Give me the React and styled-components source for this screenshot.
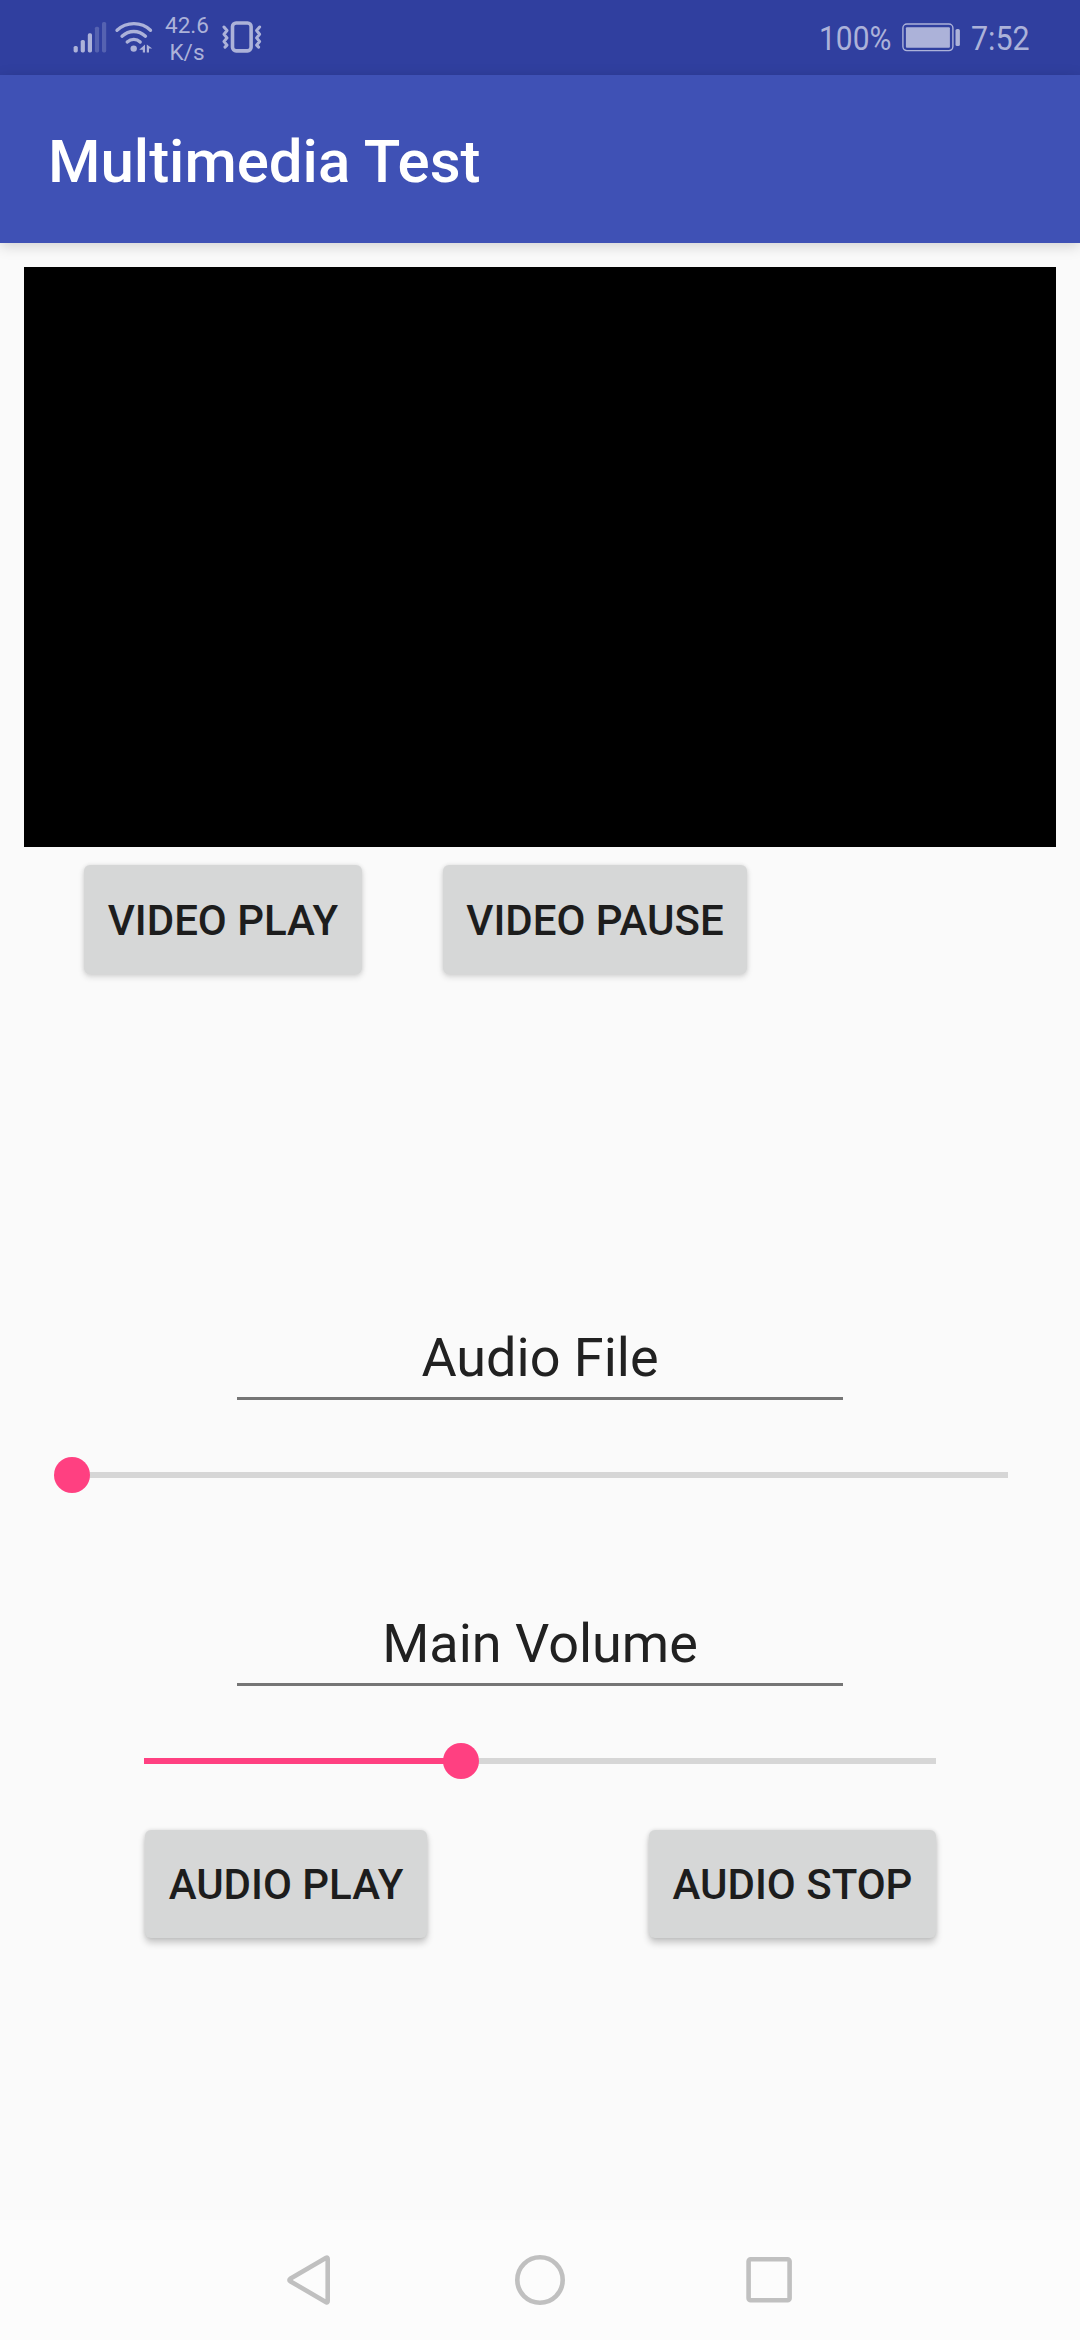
import React from "react";
import styled, { createGlobalStyle } from "styled-components";

const GlobalStyle = createGlobalStyle`
  *, *::before, *::after { box-sizing: border-box; }
  body { margin: 0; background: #fafafa; }
`;

const Screen = styled.div`
  display: flex;
  flex-direction: column;
  width: 1080px;
  height: 2340px;
  background: #fafafa;
  font-family: Roboto, "Liberation Sans", sans-serif;
  color: #212121;
  overflow: hidden;
`;

const StatusBar = styled.header`
  display: flex;
  justify-content: space-between;
  flex: none;
  height: 75px;
  padding: 0 51px 0 73px;
  background: #303f9f;
  color: #acb2d9;
`;

const StatusGroup = styled.div`
  display: flex;
  align-items: center;
`;

const StatusIcon = styled.svg`
  display: block;
  flex: none;
  width: ${(p) => p.$w}px;
  height: 75px;
  margin-left: ${(p) => p.$gap || 0}px;
`;

const NetSpeed = styled.div`
  width: 46px;
  margin-left: 10px;
  padding-top: 2px;
  text-align: center;
  font-size: 22.5px;
  line-height: 27px;
`;

const StatusText = styled.span`
  flex: none;
  width: ${(p) => p.$w}px;
  white-space: nowrap;
  font-size: 34px;
  line-height: 40px;
  transform: scaleX(${(p) => p.$condense});
  transform-origin: left center;
`;

const AppBar = styled.div`
  display: flex;
  align-items: center;
  flex: none;
  height: 168px;
  padding: 6px 48px 0;
  background: #3f51b5;
  box-shadow: 0 3px 13px rgba(0, 0, 0, 0.17);
`;

const Title = styled.h1`
  margin: 0;
  color: #fff;
  font-size: 60px;
  line-height: 70px;
  font-weight: 500;
`;

const Content = styled.main`
  display: flex;
  flex-direction: column;
  flex: 1;
  padding: 24px 24px 0;
`;

const Video = styled.div`
  height: 580px;
  background: #000;
`;

const VideoControls = styled.div`
  display: flex;
  gap: 81px;
  padding: 18px 0 0 60px;
`;

const AudioControls = styled.div`
  display: flex;
  justify-content: space-between;
  margin: 51px 120px 0 121px;
`;

const Button = styled.button`
  width: ${(p) => p.$w}px;
  height: ${(p) => p.$h}px;
  padding: 2px 0 0;
  border: 0;
  border-radius: 6px;
  background: #d6d7d7;
  color: #1d1d1d;
  font: 500 42px/50px Roboto, "Liberation Sans", sans-serif;
  white-space: nowrap;
  box-shadow: ${(p) => (p.$low
    ? "0 5px 7px rgba(0, 0, 0, 0.2), 0 0 4px rgba(0, 0, 0, 0.12)"
    : "0 3px 6px rgba(0, 0, 0, 0.14), 0 0 4px rgba(0, 0, 0, 0.09)")};
`;

const Field = styled.div`
  width: 606px;
  height: 90px;
  margin: ${(p) => p.$top}px auto 0;
  padding-top: 16px;
  border-bottom: 3px solid #757575;
  text-align: center;
  font-size: 54px;
  line-height: 64px;
`;

const Slider = styled.div`
  display: flex;
  align-items: center;
  height: 36px;
  margin: 57px ${(p) => p.$inset}px 0;
`;

const Track = styled.div`
  height: 6px;
  flex: ${(p) => p.$grow} 1 0;
  background: ${(p) => (p.$on ? "#ff4081" : "#d6d6d6")};
`;

const Thumb = styled.div`
  z-index: 1;
  flex: none;
  width: 36px;
  height: 36px;
  margin: 0 -18px;
  border-radius: 50%;
  background: #ff4081;
`;

const NavBar = styled.nav`
  display: flex;
  justify-content: center;
  align-items: center;
  gap: 178px;
  flex: none;
  height: 120px;
  background: #fcfcfc;
`;

const NavIcon = styled.svg`
  display: block;
  width: 52px;
  height: 52px;
  fill: none;
  stroke: #c0c0c0;
  stroke-width: 4.6;
  stroke-linejoin: round;
`;

const bars = [[46, 1], [40, 1], [33.3, 1], [26.7, 0.3], [22, 0.3]];

function SeekBar({ value, inset }) {
  return (
    <Slider $inset={inset}>
      <Track $on $grow={value} />
      <Thumb />
      <Track $grow={1 - value} />
    </Slider>
  );
}

export default function App() {
  return (
    <Screen>
      <GlobalStyle />
      <StatusBar>
        <StatusGroup>
          <StatusIcon $w={34} viewBox="0 0 34 75" fill="currentColor">
            {bars.map(([y, o], i) => (
              <rect key={y} x={0.6 + i * 7.1} y={y} width="4.2" height={52.4 - y} rx="1.6" opacity={o} />
            ))}
          </StatusIcon>
          <StatusIcon $w={40} $gap={7} viewBox="0 0 40 75" fill="none" stroke="currentColor" strokeWidth="3.3" strokeLinecap="round">
            <path d="M3 30.3C12.5 21.5 27.5 21.5 36.5 30.3" />
            <path d="M8 36.2C15 29.9 24.5 29.9 31.5 36.2" />
            <path d="M13.2 42C17.2 38.4 22.5 38.4 26.2 42" />
            <circle cx="19.7" cy="48.6" r="3.2" fill="currentColor" stroke="none" />
            <path d="M31 44.6V52.4H28.8V49.8H25.2ZM32.8 44.6L38.2 48.6H35V52.4H32.8Z" fill="currentColor" stroke="none" />
          </StatusIcon>
          <NetSpeed>42.6<br />K/s</NetSpeed>
          <StatusIcon $w={42} $gap={11} viewBox="0 0 42 75" fill="none" stroke="currentColor" strokeWidth="3.6" strokeLinejoin="round" strokeLinecap="round">
            <rect x="11.5" y="23" width="18.6" height="27.9" rx="3.6" />
            <path strokeWidth="3" d="M3 27l3 3.5-3 3.7 3 3.7-3 3.6 3 3.6-2 2M38.6 27l-3 3.5 3 3.7-3 3.7 3 3.6-3 3.6 2 2" />
          </StatusIcon>
        </StatusGroup>
        <StatusGroup>
          <StatusText $w={83} $condense={0.88}>100%</StatusText>
          <StatusIcon $w={69} viewBox="0 0 69 75">
            <rect x="0.9" y="24" width="50" height="26.6" rx="4" fill="none" stroke="currentColor" strokeWidth="1.4" />
            <rect x="3.9" y="27.2" width="44" height="20.6" rx="1" fill="currentColor" />
            <rect x="53.5" y="29" width="4.4" height="17" rx="1.6" fill="currentColor" />
          </StatusIcon>
          <StatusText $w={58} $condense={0.895}>7:52</StatusText>
        </StatusGroup>
      </StatusBar>
      <AppBar>
        <Title>Multimedia Test</Title>
      </AppBar>
      <Content>
        <Video />
        <VideoControls>
          <Button $w={278} $h={109}>VIDEO PLAY</Button>
          <Button $w={304} $h={109}>VIDEO PAUSE</Button>
        </VideoControls>
        <Field $top={336}>Audio File</Field>
        <SeekBar value={0} inset={48} />
        <Field $top={103}>Main Volume</Field>
        <SeekBar value={0.4} inset={120} />
        <AudioControls>
          <Button $low $w={282} $h={108}>AUDIO PLAY</Button>
          <Button $low $w={287} $h={108}>AUDIO STOP</Button>
        </AudioControls>
      </Content>
      <NavBar>
        <NavIcon viewBox="0 0 52 52">
          <path d="M42.2 3.8Q43.7 3 43.7 5V47Q43.7 49 42.2 48.2L6.2 27.2Q4.6 26 6.2 24.8Z" />
        </NavIcon>
        <NavIcon viewBox="0 0 52 52">
          <circle cx="26" cy="26" r="22.7" />
        </NavIcon>
        <NavIcon viewBox="0 0 52 52">
          <rect x="4.6" y="5.3" width="41" height="41" rx="2" />
        </NavIcon>
      </NavBar>
    </Screen>
  );
}
